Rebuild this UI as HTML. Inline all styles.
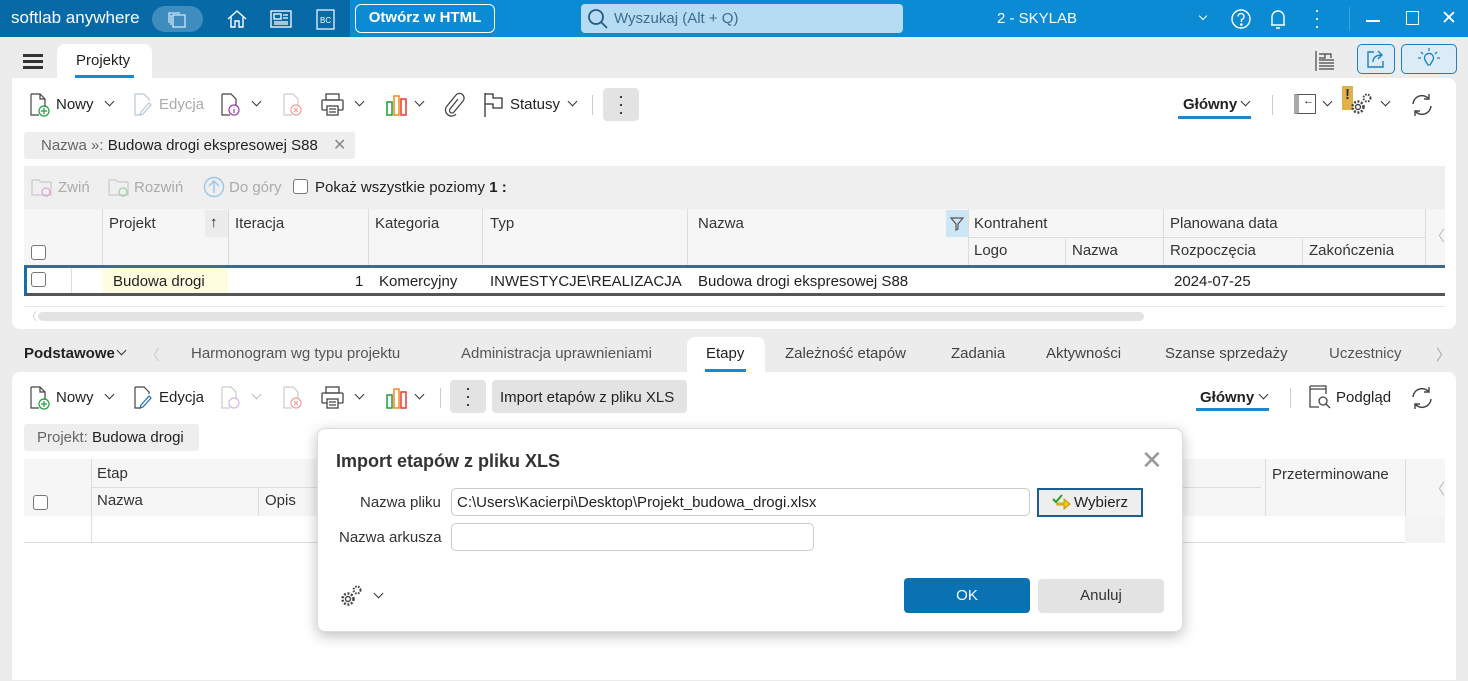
<!DOCTYPE html>
<html><head><meta charset="utf-8"><style>
*{box-sizing:border-box;margin:0;padding:0}
body{width:1468px;height:681px;overflow:hidden;background:#ececec;font-family:"Liberation Sans",sans-serif;font-size:15px;color:#222;position:relative}
.a{position:absolute;white-space:nowrap}
.tb{top:0;left:0;width:1468px;height:37px;background:#0a8bd3}
.w{color:#fff}
.g{color:#aaa}
.hd{color:#333}
.cb{position:absolute;width:15px;height:15px;border:1px solid #777;border-radius:3px;background:#fff}
.vl{position:absolute;width:1px;background:#ddd}
.hl{position:absolute;height:1px;background:#ddd}
.ch{position:absolute;width:7px;height:7px;border-right:1.3px solid #333;border-bottom:1.3px solid #333;transform:rotate(45deg)}
svg{position:absolute}
</style></head><body>
<div class="a tb"></div>
<div class="a" style="left:0;top:0;width:350px;height:37px;background:#0769a6"></div>
<div class="a w" style="left:11px;top:8px;font-size:17px">softlab anywhere</div>
<div class="a" style="left:152px;top:6px;width:51px;height:26px;border-radius:13px;background:#3f8dbf"></div>
<svg style="left:165px;top:9px" width="24" height="20" viewBox="0 0 24 20" fill="none" stroke="#cfe6f5" stroke-width="1.3"><rect x="8" y="6" width="12" height="12"/><path d="M4 14V4h11M6 16V6"/></svg>
<svg style="left:226px;top:9px" width="22" height="20" viewBox="0 0 22 20" fill="none" stroke="#fff" stroke-width="1.4"><path d="M2 10L11 2l9 8M5 8v10h4v-6h4v6h4V8"/></svg>
<svg style="left:270px;top:10px" width="22" height="18" viewBox="0 0 22 18" fill="none" stroke="#fff" stroke-width="1.3"><rect x="1" y="1" width="20" height="16"/><rect x="4" y="4" width="7" height="5"/><path d="M13 5h5M13 8h5M4 12h14M4 14h14"/></svg>
<svg style="left:316px;top:9px" width="19" height="21" viewBox="0 0 19 21" fill="none" stroke="#fff" stroke-width="1.2"><rect x="1" y="1" width="17" height="19"/></svg>
<div class="a w" style="left:320px;top:16px;font-size:8px">BC</div>
<div class="a w" style="left:355px;top:4px;width:140px;height:29px;border:1.5px solid #fff;border-radius:6px;font-weight:bold;text-align:center;line-height:26px">Otwórz w HTML</div>
<div class="a" style="left:581px;top:4px;width:322px;height:29px;border-radius:4px;background:#b5dcf2"></div>
<svg style="left:587px;top:8px" width="22" height="22" viewBox="0 0 22 22" fill="none" stroke="#245b85" stroke-width="1.8"><circle cx="9" cy="9" r="7"/><path d="M14 14l6 6"/></svg>
<div class="a" style="left:614px;top:10px;color:#3d6c90">Wyszukaj (Alt + Q)</div>
<div class="a w" style="left:997px;top:10px">2 - SKYLAB</div>
<div class="ch" style="left:1200px;top:13px;border-color:#fff;width:6px;height:6px"></div>
<svg style="left:1230px;top:8px" width="22" height="22" viewBox="0 0 22 22" fill="none" stroke="#fff" stroke-width="1.4"><circle cx="11" cy="11" r="9"/><path d="M8 8.5a3 3 0 1 1 3.5 3V14"/><circle cx="11.3" cy="16.5" r=".6" fill="#fff"/></svg>
<svg style="left:1268px;top:7px" width="20" height="24" viewBox="0 0 20 24" fill="none" stroke="#fff" stroke-width="1.4"><path d="M4 18V10a6 6 0 0 1 12 0v8H3h14M8 21h4"/></svg>
<div class="a w" style="left:1314px;top:6px;font-size:18px;line-height:8px">·<br>·<br>·</div>
<div class="a" style="left:1349px;top:7px;width:1px;height:24px;background:#3aa5e0"></div>
<div class="a" style="left:1366px;top:20px;width:14px;height:1.5px;background:#fff"></div>
<div class="a" style="left:1406px;top:11px;width:13px;height:14px;border:1.5px solid #fff"></div>
<div class="a w" style="left:1441px;top:7px;font-size:19px">✕</div>
<div class="a" style="left:23px;top:54px;width:20px;height:3px;background:#333;box-shadow:0 6px 0 #333,0 12px 0 #333"></div>
<div class="a" style="left:57px;top:44px;width:95px;height:40px;background:#fff;border-radius:8px 8px 0 0"></div>
<div class="a" style="left:76px;top:52px">Projekty</div>
<div class="a" style="left:75px;top:75px;width:59px;height:3px;background:#1a8ad0"></div>
<svg style="left:1313px;top:50px" width="24" height="22" viewBox="0 0 24 22" fill="none" stroke="#444" stroke-width="1.2"><path d="M3 1v20M6 4h6v4H6M6 10h15M6 13h15M6 16h15M6 19h15M12 4h6v4"/></svg>
<div class="a" style="left:1357px;top:44px;width:38px;height:30px;border:1.5px solid #1e7fbf;border-radius:5px;background:#dcecf7"></div>
<svg style="left:1366px;top:49px" width="20" height="20" viewBox="0 0 20 20" fill="none" stroke="#1e7fbf" stroke-width="1.4"><path d="M8 3H2v15h15v-6M7 13c0-5 4-7 9-7M12 2l4 4-4 4"/></svg>
<div class="a" style="left:1401px;top:44px;width:56px;height:30px;border:1.5px solid #1e7fbf;border-radius:5px;background:#dcecf7"></div>
<svg style="left:1416px;top:47px" width="26" height="24" viewBox="0 0 26 24" fill="none" stroke="#1e7fbf" stroke-width="1.3"><path d="M9 13a4.5 4.5 0 1 1 8 0l-3 5h-2zM13 1v3M5 5l2 2M21 5l-2 2M2 11h3M21 11h3"/></svg>
<div class="a" style="left:12px;top:78px;width:1444px;height:251px;background:#fff;border-radius:0 8px 8px 8px"></div>
<svg style="left:28px;top:93px" width="24" height="24" viewBox="0 0 24 24" fill="none" stroke-width="1.2"><path d="M3 1h9l5 5v8M12 1v5h5M3 1v21h8" stroke="#444"/><circle cx="16" cy="18" r="5" stroke="#1aa33c"/><path d="M16 15v6M13 18h6" stroke="#1aa33c"/></svg>
<div class="a" style="left:56px;top:96px">Nowy</div><div class="ch" style="left:106px;top:98px"></div>
<svg style="left:132px;top:93px" width="22" height="24" viewBox="0 0 22 24" fill="none" stroke="#b9c8d6" stroke-width="1.2"><path d="M3 1h9l5 5v2M3 1v21h6M17 10l-8 9-1 3 3-1 8-9z"/></svg>
<div class="a g" style="left:159px;top:96px">Edycja</div>
<svg style="left:219px;top:93px" width="24" height="24" viewBox="0 0 24 24" fill="none" stroke-width="1.2"><path d="M3 1h9l5 5v6M3 1v21h8" stroke="#444"/><circle cx="15" cy="17" r="5" stroke="#9b3fb5"/><path d="M15 16v4M15 14v.5" stroke="#9b3fb5"/></svg>
<div class="ch" style="left:253px;top:98px"></div>
<svg style="left:281px;top:93px" width="24" height="24" viewBox="0 0 24 24" fill="none" stroke-width="1.2"><path d="M3 1h9l5 5v6M3 1v21h8" stroke="#ccc"/><circle cx="15" cy="17" r="5" stroke="#f0a0a0"/><path d="M13 15l4 4M17 15l-4 4" stroke="#f0a0a0"/></svg>
<svg style="left:320px;top:93px" width="26" height="24" viewBox="0 0 26 24" fill="none" stroke="#444" stroke-width="1.3"><rect x="6" y="1" width="13" height="6"/><rect x="2" y="7" width="21" height="10" rx="1"/><rect x="7" y="13" width="11" height="9" fill="#fff"/><path d="M9 16h7M9 19h7"/></svg>
<div class="ch" style="left:356px;top:98px"></div>
<svg style="left:385px;top:93px" width="26" height="24" viewBox="0 0 26 24"><rect x="2" y="9" width="5" height="13" fill="#fff" stroke="#1a9d3a" stroke-width="1.5"/><rect x="9" y="3" width="5" height="19" fill="#fff" stroke="#f08a1a" stroke-width="1.5"/><rect x="16" y="6" width="5" height="16" fill="#fff" stroke="#e33" stroke-width="1.5"/></svg>
<div class="ch" style="left:416px;top:98px"></div>
<svg style="left:443px;top:92px" width="22" height="26" viewBox="0 0 22 26" fill="none" stroke="#444" stroke-width="1.3"><path d="M15 7l-8 10a2.5 2.5 0 0 0 4 3l9-11a4.5 4.5 0 0 0-7-6L4 14a6 6 0 0 0 9 8"/></svg>
<svg style="left:483px;top:92px" width="22" height="26" viewBox="0 0 22 26" fill="none" stroke="#333" stroke-width="1.3"><path d="M2 1v24M2 2h8v4h9v10h-9v-4H2"/></svg>
<div class="a" style="left:510px;top:96px">Statusy</div><div class="ch" style="left:569px;top:98px"></div>
<div class="a" style="left:592px;top:95px;width:1px;height:20px;background:#ccc"></div>
<div class="a" style="left:603px;top:88px;width:36px;height:33px;background:#e3e3e3;border-radius:4px;text-align:center;font-size:18px;line-height:8px;padding-top:4px">·<br>·<br>·</div>
<div class="a" style="left:1183px;top:96px;font-weight:bold">Główny</div><div class="ch" style="left:1242px;top:98px"></div>
<div class="a" style="left:1178px;top:116px;width:73px;height:3px;background:#1a8ad0"></div>
<div class="a" style="left:1272px;top:95px;width:1px;height:20px;background:#ccc"></div>
<div class="a" style="left:1294px;top:94px;width:22px;height:20px;border:1px solid #555;border-left:5px solid #aaa"></div><div class="a" style="left:1303px;top:95px;font-size:11px">←</div>
<div class="ch" style="left:1324px;top:98px"></div>
<div class="a" style="left:1342px;top:86px;width:11px;height:24px;background:#e1b04a"></div><div class="a" style="left:1345px;top:86px;font-weight:bold;color:#333">!</div>
<svg style="left:1350px;top:92px" width="24" height="24" viewBox="0 0 24 24" fill="none" stroke="#444" stroke-width="1.4"><circle cx="8" cy="15" r="5.5" stroke-width="2.5" stroke-dasharray="2 1.6"/><circle cx="8" cy="15" r="2.5"/><circle cx="17" cy="6" r="3.5" stroke-width="2" stroke-dasharray="1.6 1.3"/></svg>
<div class="ch" style="left:1382px;top:98px"></div>
<svg style="left:1410px;top:92px" width="24" height="26" viewBox="0 0 24 26" fill="none" stroke="#444" stroke-width="1.4"><path d="M3 12a9 9 0 0 1 16-5M21 14a9 9 0 0 1-16 5M19 2v5h-5M5 24v-5h5"/></svg>
<div class="a" style="left:24px;top:132px;width:331px;height:27px;background:#eee;border-radius:3px"></div>
<div class="a" style="left:41px;top:137px;color:#666">Nazwa »: <span style="color:#222">Budowa drogi ekspresowej S88</span></div>
<div class="a" style="left:333px;top:135px;color:#888;font-size:16px">✕</div>
<div class="a" style="left:24px;top:166px;width:1421px;height:43px;background:#efefef"></div>
<div class="a g" style="left:58px;top:179px">Zwiń</div>
<div class="a g" style="left:134px;top:179px">Rozwiń</div>
<div class="a g" style="left:229px;top:179px">Do góry</div>
<svg style="left:31px;top:177px" width="22" height="20" viewBox="0 0 22 20" fill="none" stroke="#c9c9c9" stroke-width="1.2"><path d="M1 3h7l2 2h10v13H1z"/><circle cx="15" cy="15" r="4" stroke="#d9a3d9"/></svg>
<svg style="left:108px;top:177px" width="22" height="20" viewBox="0 0 22 20" fill="none" stroke="#c9c9c9" stroke-width="1.2"><path d="M1 3h7l2 2h10v13H1z"/><circle cx="15" cy="15" r="4" stroke="#9bd0a6"/></svg>
<svg style="left:203px;top:176px" width="22" height="22" viewBox="0 0 22 22" fill="none" stroke="#9cc6e6" stroke-width="1.4"><circle cx="11" cy="11" r="9.5"/><path d="M11 17V5M6 10l5-5 5 5"/></svg>
<div class="cb" style="left:293px;top:179px"></div>
<div class="a" style="left:315px;top:179px">Pokaż wszystkie poziomy <b>1 :</b></div>
<div class="a" style="left:24px;top:209px;width:1421px;height:57px;background:#f6f6f6"></div>
<div class="hl" style="left:968px;top:237px;width:457px"></div>
<div class="vl" style="left:102px;top:209px;height:57px"></div>
<div class="vl" style="left:228px;top:209px;height:57px"></div>
<div class="vl" style="left:368px;top:209px;height:57px"></div>
<div class="vl" style="left:482px;top:209px;height:57px"></div>
<div class="vl" style="left:687px;top:209px;height:57px"></div>
<div class="vl" style="left:968px;top:209px;height:57px"></div>
<div class="vl" style="left:1065px;top:237px;height:29px"></div>
<div class="vl" style="left:1163px;top:209px;height:57px"></div>
<div class="vl" style="left:1302px;top:237px;height:29px"></div>
<div class="vl" style="left:1425px;top:209px;height:57px"></div>
<div class="a" style="left:205px;top:210px;width:23px;height:27px;background:#ececec"></div>
<div class="a hd" style="left:109px;top:215px">Projekt</div><div class="a" style="left:210px;top:214px">↑</div>
<div class="a hd" style="left:235px;top:215px">Iteracja</div>
<div class="a hd" style="left:375px;top:215px">Kategoria</div>
<div class="a hd" style="left:490px;top:215px">Typ</div>
<div class="a hd" style="left:698px;top:215px">Nazwa</div>
<div class="a" style="left:946px;top:210px;width:22px;height:27px;background:#cde6f6"></div>
<svg style="left:950px;top:217px" width="14" height="14" viewBox="0 0 14 14" fill="none" stroke="#555" stroke-width="1.2"><path d="M1 1h12L8 7v5L6 13V7z"/></svg>
<div class="a hd" style="left:974px;top:215px">Kontrahent</div>
<div class="a hd" style="left:1170px;top:215px">Planowana data</div>
<div class="a hd" style="left:974px;top:242px">Logo</div>
<div class="a hd" style="left:1072px;top:242px">Nazwa</div>
<div class="a hd" style="left:1170px;top:242px">Rozpoczęcia</div>
<div class="a hd" style="left:1309px;top:242px">Zakończenia</div>
<div class="a" style="left:1430px;top:225px;color:#bbb">〈</div>
<div class="cb" style="left:31px;top:245px"></div>
<div class="a" style="left:24px;top:265px;width:1421px;height:31px;border-top:3px solid #3f6a89;border-bottom:3px solid #555;border-left:3px solid #1a6ea8;background:#fff"></div>
<div class="a" style="left:103px;top:268px;width:125px;height:25px;background:#fffde0"></div>
<div class="vl" style="left:71px;top:268px;height:25px"></div>
<div class="cb" style="left:31px;top:272px"></div>
<div class="a" style="left:113px;top:273px">Budowa drogi</div>
<div class="a" style="left:355px;top:273px">1</div>
<div class="a" style="left:379px;top:273px">Komercyjny</div>
<div class="a" style="left:490px;top:273px">INWESTYCJE\REALIZACJA</div>
<div class="a" style="left:698px;top:273px">Budowa drogi ekspresowej S88</div>
<div class="a" style="left:1174px;top:273px">2024-07-25</div>
<div class="hl" style="left:24px;top:306px;width:1421px;background:#e6e6e6"></div>
<div class="a" style="left:38px;top:312px;width:1106px;height:9px;border-radius:5px;background:#e3e3e3"></div>
<div class="a" style="left:26px;top:308px;color:#ccc;font-size:11px">〈</div>
<div class="a" style="left:24px;top:345px;font-weight:bold">Podstawowe</div><div class="ch" style="left:118px;top:347px"></div>
<div class="a" style="left:145px;top:344px;color:#ccc">〈</div>
<div class="a" style="left:191px;top:345px;color:#555">Harmonogram wg typu projektu</div>
<div class="a" style="left:461px;top:345px;color:#555">Administracja uprawnieniami</div>
<div class="a" style="left:687px;top:337px;width:78px;height:40px;background:#fff;border-radius:8px 8px 0 0"></div>
<div class="a" style="left:706px;top:345px">Etapy</div>
<div class="a" style="left:705px;top:369px;width:41px;height:3px;background:#1a8ad0"></div>
<div class="a" style="left:785px;top:345px;color:#444">Zależność etapów</div>
<div class="a" style="left:951px;top:345px;color:#444">Zadania</div>
<div class="a" style="left:1046px;top:345px;color:#444">Aktywności</div>
<div class="a" style="left:1165px;top:345px;color:#444">Szanse sprzedaży</div>
<div class="a" style="left:1329px;top:345px;color:#555">Uczestnicy</div>
<div class="a" style="left:1436px;top:344px;color:#aaa">〉</div>
<div class="a" style="left:12px;top:372px;width:1444px;height:308px;background:#fff;border-radius:8px 8px 0 0"></div>
<svg style="left:28px;top:386px" width="24" height="24" viewBox="0 0 24 24" fill="none" stroke-width="1.2"><path d="M3 1h9l5 5v8M12 1v5h5M3 1v21h8" stroke="#444"/><circle cx="16" cy="18" r="5" stroke="#1aa33c"/><path d="M16 15v6M13 18h6" stroke="#1aa33c"/></svg>
<div class="a" style="left:56px;top:389px">Nowy</div><div class="ch" style="left:106px;top:391px"></div>
<svg style="left:132px;top:386px" width="22" height="24" viewBox="0 0 22 24" fill="none" stroke="#444" stroke-width="1.2"><path d="M3 1h9l5 5v2M3 1v21h6"/><path d="M17 10l-8 9-1 3 3-1 8-9z" stroke="#1e6fb5"/></svg>
<div class="a" style="left:159px;top:389px">Edycja</div>
<svg style="left:219px;top:386px" width="24" height="24" viewBox="0 0 24 24" fill="none" stroke-width="1.2"><path d="M3 1h9l5 5v6M3 1v21h8" stroke="#ccc"/><circle cx="15" cy="17" r="5" stroke="#d8b5e2"/></svg>
<div class="ch" style="left:253px;top:391px;border-color:#bbb"></div>
<svg style="left:281px;top:386px" width="24" height="24" viewBox="0 0 24 24" fill="none" stroke-width="1.2"><path d="M3 1h9l5 5v6M3 1v21h8" stroke="#ccc"/><circle cx="15" cy="17" r="5" stroke="#f0a0a0"/><path d="M13 15l4 4M17 15l-4 4" stroke="#f0a0a0"/></svg>
<svg style="left:320px;top:386px" width="26" height="24" viewBox="0 0 26 24" fill="none" stroke="#444" stroke-width="1.3"><rect x="6" y="1" width="13" height="6"/><rect x="2" y="7" width="21" height="10" rx="1"/><rect x="7" y="13" width="11" height="9" fill="#fff"/><path d="M9 16h7M9 19h7"/></svg>
<div class="ch" style="left:356px;top:391px"></div>
<svg style="left:385px;top:386px" width="26" height="24" viewBox="0 0 26 24"><rect x="2" y="9" width="5" height="13" fill="#fff" stroke="#1a9d3a" stroke-width="1.5"/><rect x="9" y="3" width="5" height="19" fill="#fff" stroke="#f08a1a" stroke-width="1.5"/><rect x="16" y="6" width="5" height="16" fill="#fff" stroke="#e33" stroke-width="1.5"/></svg>
<div class="ch" style="left:416px;top:391px"></div>
<div class="a" style="left:440px;top:388px;width:1px;height:20px;background:#ccc"></div>
<div class="a" style="left:450px;top:380px;width:36px;height:33px;background:#e3e3e3;border-radius:4px;text-align:center;font-size:18px;line-height:8px;padding-top:4px">·<br>·<br>·</div>
<div class="a" style="left:492px;top:380px;width:195px;height:33px;background:#e3e3e3;border-radius:4px"></div>
<div class="a" style="left:500px;top:389px">Import etapów z pliku XLS</div>
<div class="a" style="left:1200px;top:389px;font-weight:bold">Główny</div><div class="ch" style="left:1260px;top:391px"></div>
<div class="a" style="left:1196px;top:408px;width:73px;height:3px;background:#1a8ad0"></div>
<div class="a" style="left:1290px;top:388px;width:1px;height:20px;background:#ccc"></div>
<svg style="left:1308px;top:385px" width="26" height="24" viewBox="0 0 26 24" fill="none" stroke="#444" stroke-width="1.3"><path d="M2 1h16v8M2 1v21h9M2 4h16"/><circle cx="15" cy="16" r="4"/><path d="M18 19l4 4"/></svg>
<div class="a" style="left:1336px;top:389px">Podgląd</div>
<svg style="left:1410px;top:385px" width="24" height="26" viewBox="0 0 24 26" fill="none" stroke="#444" stroke-width="1.4"><path d="M3 12a9 9 0 0 1 16-5M21 14a9 9 0 0 1-16 5M19 2v5h-5M5 24v-5h5"/></svg>
<div class="a" style="left:24px;top:424px;width:175px;height:27px;background:#eee;border-radius:3px"></div>
<div class="a" style="left:37px;top:429px;color:#666">Projekt: <span style="color:#222">Budowa drogi</span></div>
<div class="a" style="left:24px;top:459px;width:1421px;height:57px;background:#f6f6f6"></div>
<div class="hl" style="left:91px;top:487px;width:1170px"></div>
<div class="vl" style="left:91px;top:459px;height:84px"></div>
<div class="vl" style="left:258px;top:487px;height:29px"></div>
<div class="vl" style="left:1265px;top:459px;height:57px"></div>
<div class="vl" style="left:1405px;top:459px;height:57px"></div>
<div class="a hd" style="left:97px;top:465px">Etap</div>
<div class="a hd" style="left:97px;top:492px">Nazwa</div>
<div class="a hd" style="left:265px;top:492px">Opis</div>
<div class="a hd" style="left:1272px;top:466px">Przeterminowane</div>
<div class="a" style="left:1430px;top:478px;color:#bbb">〈</div>
<div class="cb" style="left:33px;top:495px"></div>
<div class="a" style="left:1405px;top:516px;width:40px;height:27px;background:#f3f3f3"></div>
<div class="hl" style="left:24px;top:542px;width:1381px"></div>
<div class="a" style="left:317px;top:428px;width:866px;height:204px;background:#fff;border:1px solid #ddd;border-radius:8px;box-shadow:0 4px 14px rgba(0,0,0,.25)"></div>
<div class="a" style="left:336px;top:451px;font-size:18px;font-weight:bold;color:#333">Import etapów z pliku XLS</div>
<div class="a" style="left:1141px;top:445px;font-size:26px;color:#999;font-weight:300">✕</div>
<div class="a" style="left:360px;top:494px;color:#333">Nazwa pliku</div>
<div class="a" style="left:451px;top:488px;width:579px;height:28px;border:1px solid #ccc;border-radius:5px"></div>
<div class="a" style="left:457px;top:494px">C:\Users\Kacierpi\Desktop\Projekt_budowa_drogi.xlsx</div>
<div class="a" style="left:1037px;top:488px;width:106px;height:29px;border:2px solid #1a5f8f;background:#eee"></div>
<svg style="left:1051px;top:493px" width="20" height="18" viewBox="0 0 20 18"><path d="M2 6l3 3 6-7" fill="none" stroke="#2a9d2a" stroke-width="2"/><path d="M6 10h7V6l6 5-6 5v-4H6z" fill="#f5c800" stroke="#b08a00" stroke-width=".8"/></svg>
<div class="a" style="left:1074px;top:494px">Wybierz</div>
<div class="a" style="left:339px;top:529px;color:#333">Nazwa arkusza</div>
<div class="a" style="left:451px;top:523px;width:363px;height:28px;border:1px solid #ccc;border-radius:5px"></div>
<svg style="left:340px;top:584px" width="24" height="24" viewBox="0 0 24 24" fill="none" stroke="#444" stroke-width="1.4"><circle cx="8" cy="15" r="5.5" stroke-width="2.5" stroke-dasharray="2 1.6"/><circle cx="8" cy="15" r="2.5"/><circle cx="17" cy="6" r="3.5" stroke-width="2" stroke-dasharray="1.6 1.3"/></svg>
<div class="ch" style="left:375px;top:590px"></div>
<div class="a" style="left:904px;top:578px;width:126px;height:35px;background:#0a72b3;border-radius:4px;color:#fff;text-align:center;line-height:35px">OK</div>
<div class="a" style="left:1038px;top:579px;width:126px;height:34px;background:#e3e3e3;border-radius:4px;text-align:center;line-height:34px;color:#333">Anuluj</div>
</body></html>
